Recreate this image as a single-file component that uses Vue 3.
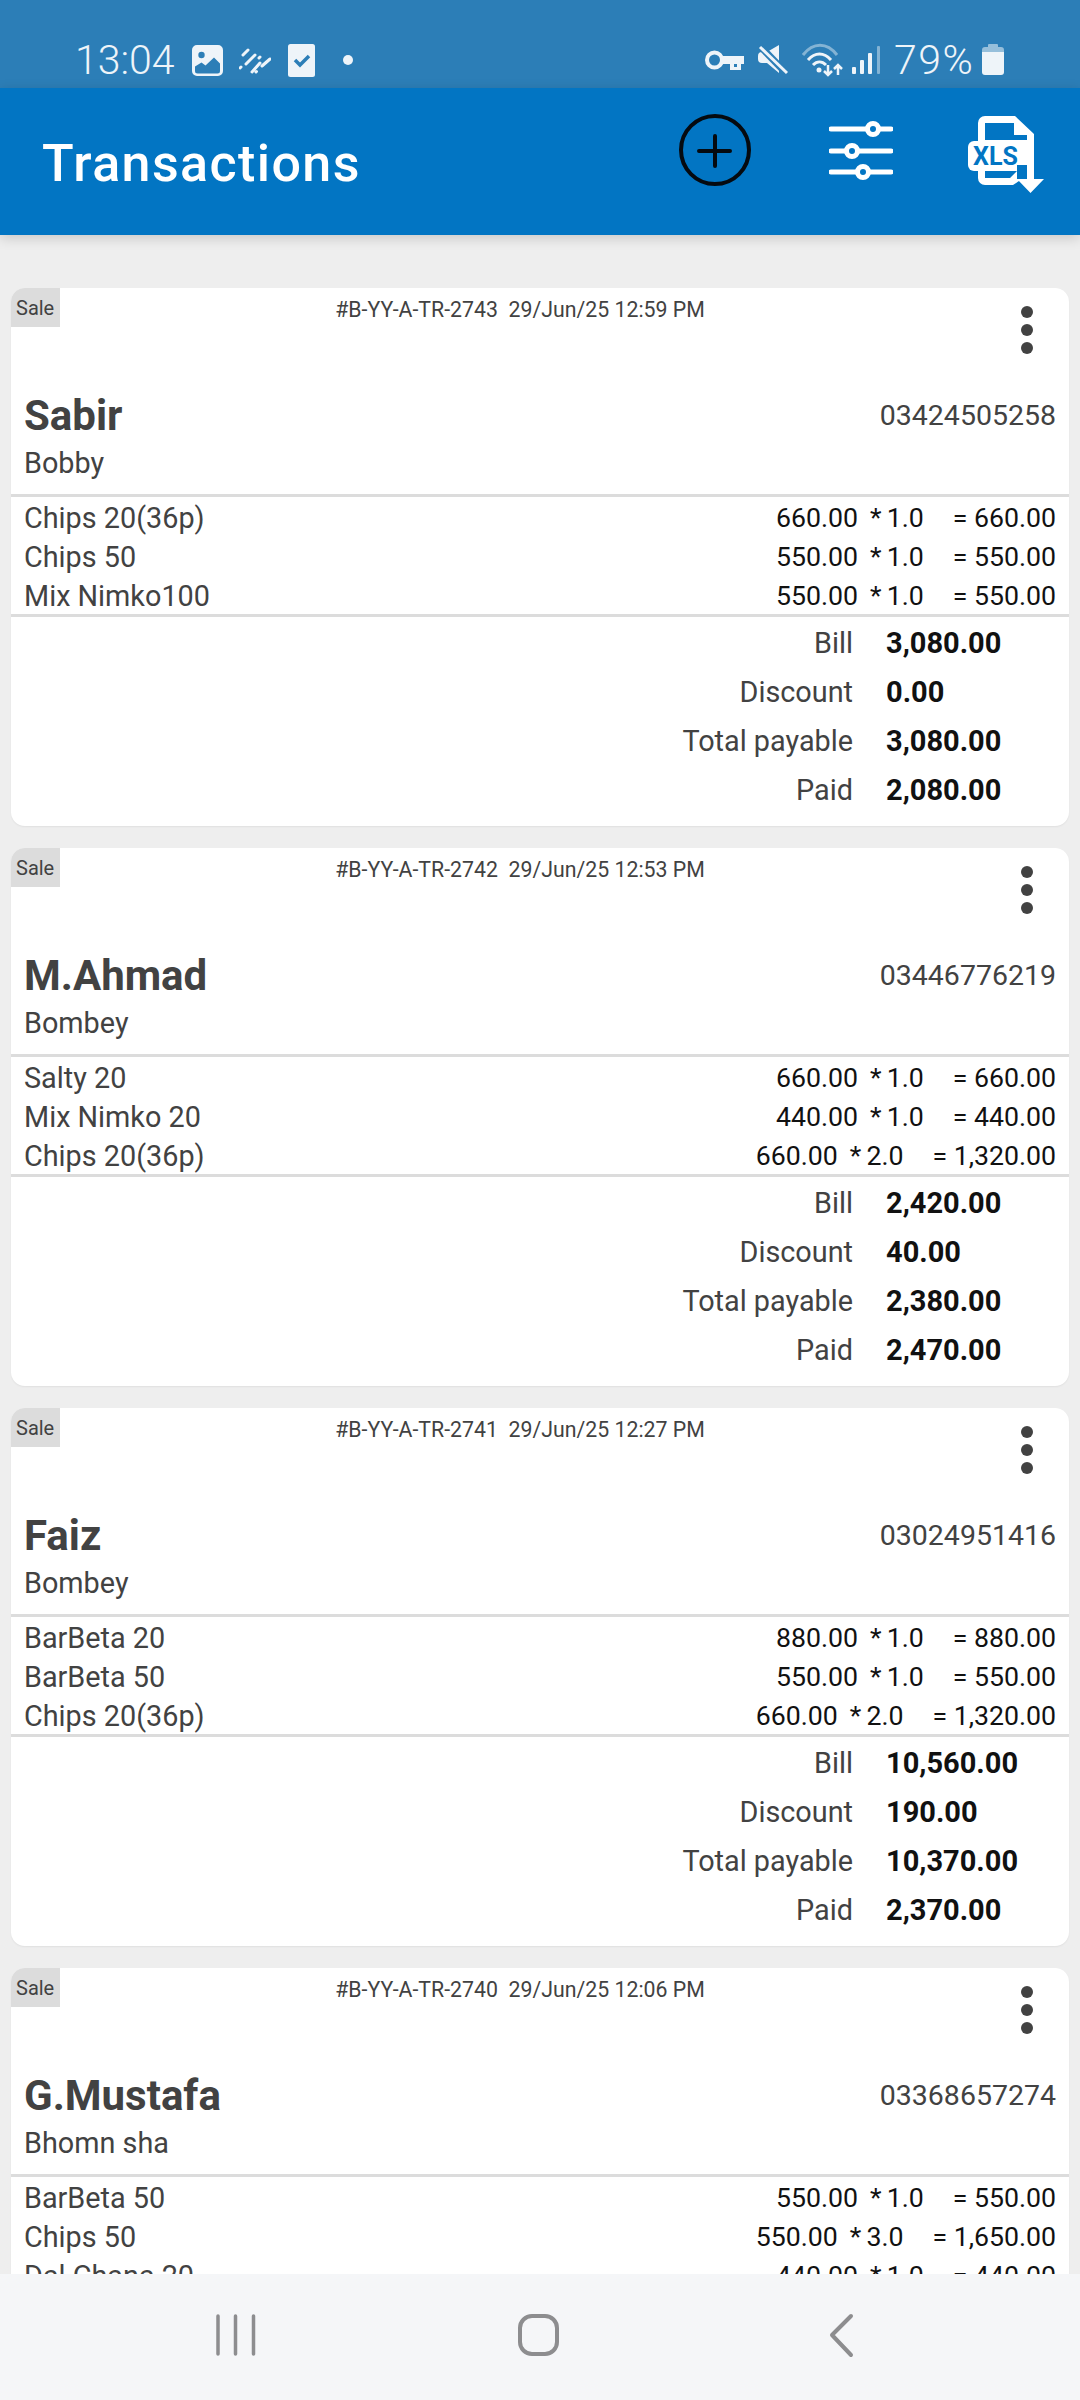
<script setup>
const transactions = [
  {
    no: '2743', time: '12:59 PM', name: 'Sabir', phone: '03424505258', area: 'Bobby',
    items: [
      { name: 'Chips 20(36p)', price: '660.00', qty: '1.0', total: '660.00' },
      { name: 'Chips 50', price: '550.00', qty: '1.0', total: '550.00' },
      { name: 'Mix Nimko100', price: '550.00', qty: '1.0', total: '550.00' },
    ],
    summary: [
      ['Bill', '3,080.00'],
      ['Discount', '0.00'],
      ['Total payable', '3,080.00'],
      ['Paid', '2,080.00'],
    ],
  },
  {
    no: '2742', time: '12:53 PM', name: 'M.Ahmad', phone: '03446776219', area: 'Bombey',
    items: [
      { name: 'Salty 20', price: '660.00', qty: '1.0', total: '660.00' },
      { name: 'Mix Nimko 20', price: '440.00', qty: '1.0', total: '440.00' },
      { name: 'Chips 20(36p)', price: '660.00', qty: '2.0', total: '1,320.00' },
    ],
    summary: [
      ['Bill', '2,420.00'],
      ['Discount', '40.00'],
      ['Total payable', '2,380.00'],
      ['Paid', '2,470.00'],
    ],
  },
  {
    no: '2741', time: '12:27 PM', name: 'Faiz', phone: '03024951416', area: 'Bombey',
    items: [
      { name: 'BarBeta 20', price: '880.00', qty: '1.0', total: '880.00' },
      { name: 'BarBeta 50', price: '550.00', qty: '1.0', total: '550.00' },
      { name: 'Chips 20(36p)', price: '660.00', qty: '2.0', total: '1,320.00' },
    ],
    summary: [
      ['Bill', '10,560.00'],
      ['Discount', '190.00'],
      ['Total payable', '10,370.00'],
      ['Paid', '2,370.00'],
    ],
  },
  {
    no: '2740', time: '12:06 PM', name: 'G.Mustafa', phone: '03368657274', area: 'Bhomn sha',
    items: [
      { name: 'BarBeta 50', price: '550.00', qty: '1.0', total: '550.00' },
      { name: 'Chips 50', price: '550.00', qty: '3.0', total: '1,650.00' },
      { name: 'Dal Chana 20', price: '440.00', qty: '1.0', total: '440.00' },
    ],
    summary: [],
  },
];
</script>

<template>
  <div class="screen">
    <div class="status-bar">
      <span class="clock">13:04</span>
      <svg class="st-image" width="31" height="40" viewBox="192 40 31 40">
        <path fill="#eef4f9" fill-rule="evenodd" d="M197 45h21a5 5 0 0 1 5 5v21a5 5 0 0 1-5 5h-21a5 5 0 0 1-5-5V50a5 5 0 0 1 5-5zM195 71a2.500 2.500 0 0 0 2.500 2.500h20a2.500 2.500 0 0 0 2.500-2.500v-7.500l-6-6-8.500 8-4-3-6.500 4z" />
        <circle cx="201.500" cy="55" r="3.200" fill="#2c7eb7" />
      </svg>
      <svg class="st-pulse" width="32" height="40" viewBox="239 40 32 40">
        <g stroke="#eef4f9" stroke-width="3" stroke-linecap="round">
          <path d="M243 55l5-5M246 64l9-9M252 72l8-9M262 66l8-7M259 58l1-1M240 68l1-1M256 72l.5-.5" />
        </g>
      </svg>
      <svg class="st-check" width="27" height="40" viewBox="288 40 27 40">
        <rect x="288" y="44" width="27" height="33" rx="2.500" fill="#eef4f9" />
        <path d="M295 60l5 5 9-9" fill="none" stroke="#2c7eb7" stroke-width="3.500" />
      </svg>
      <span class="st-dot"></span>

      <svg class="st-key" width="39" height="40" viewBox="705 40 39 40">
        <circle cx="714.500" cy="60" r="7.500" fill="none" stroke="#eef4f9" stroke-width="4" />
        <path d="M722 56h22v8h-3v6h-11v-6h-8z" fill="#eef4f9" />
        <path d="M734 64v3h3v-3z" fill="#2c7eb7" />
      </svg>
      <svg class="st-mute" width="30" height="40" viewBox="758 40 30 40">
        <path d="M779 45v28l-12-10h-5a4 4 0 0 1-4-4v-3a4 4 0 0 1 4-4h5z" fill="#eef4f9" />
        <path d="M759 45l28 29" stroke="#2c7eb7" stroke-width="7" />
        <path d="M760 47l27 26" stroke="#eef4f9" stroke-width="3" />
      </svg>
      <svg class="st-wifi" width="41" height="40" viewBox="802 40 41 40">
        <path d="M803 55c10-13 24-13 34 0" fill="none" stroke="#eef4f9" stroke-opacity=".45" stroke-width="3" />
        <path d="M808 60c7-8 16-8 23 0M813 65c4-4 9-4 13 0" fill="none" stroke="#eef4f9" stroke-width="3" />
        <circle cx="819" cy="70" r="2.500" fill="#eef4f9" />
        <path d="M828 65v10M824 71l4 4 4-4M838 75V65M834 69l4-4 4 4" fill="none" stroke="#eef4f9" stroke-width="2.500" />
      </svg>
      <svg class="st-signal" width="29" height="40" viewBox="852 40 29 40">
        <rect x="852" y="67" width="4" height="7" rx="1" fill="#eef4f9" />
        <rect x="860" y="60" width="4" height="14" rx="1" fill="#eef4f9" />
        <rect x="868" y="53" width="4" height="21" rx="1" fill="#eef4f9" />
        <rect x="877" y="46" width="3" height="28" rx="1" fill="#eef4f9" fill-opacity=".45" />
      </svg>
      <span class="battery-text">79%</span>
      <svg class="st-battery" width="22" height="40" viewBox="982 40 22 40">
        <path d="M989 44h8a1 1 0 0 1 1 1v2h3a3 3 0 0 1 3 3v2h-22v-2a3 3 0 0 1 3-3h3v-2a1 1 0 0 1 1-1z" fill="#eef4f9" fill-opacity=".55" />
        <path d="M982 52h22v20a3 3 0 0 1-3 3h-16a3 3 0 0 1-3-3z" fill="#eef4f9" />
      </svg>
    </div>

    <div class="app-bar">
      <h1 class="title">Transactions</h1>
      <svg class="bar-add" width="80" height="90" viewBox="675 110 80 90">
        <circle cx="715" cy="150" r="34" fill="none" stroke="#050a10" stroke-width="4" />
        <path d="M699 151h31M715 136v30" fill="none" stroke="#050a10" stroke-width="4" stroke-linecap="round" />
      </svg>
      <svg class="bar-filter" width="64" height="90" viewBox="829 110 64 90">
        <path d="M831 129h60M831 151h60M831 172h60" stroke="#fff" stroke-width="5" stroke-linecap="round" />
        <g fill="#0275c3" stroke="#fff" stroke-width="5">
          <circle cx="873" cy="129" r="5.500" />
          <circle cx="852" cy="151" r="5.500" />
          <circle cx="863" cy="172" r="5.500" />
        </g>
      </svg>
      <svg class="bar-xls" width="76" height="90" viewBox="968 110 76 90">
        <path fill="#fff" fill-rule="evenodd" d="M985 116h30l19 18v45h-12l-9 6h-28a7 7 0 0 1-7-7v-55a7 7 0 0 1 7-7zM985 123v17h42v-5h-13v-12zM985 171v7h25l7-7z" />
        <rect x="968" y="141" width="49" height="30" rx="6" fill="#fff" />
        <text x="995.500" y="165" class="xls-label" text-anchor="middle">XLS</text>
        <rect x="1017" y="165" width="10" height="14" fill="#0275c3" />
        <path d="M1027 165h7v14h10l-13.500 14-13.500-14h10z" fill="#fff" />
      </svg>
    </div>

    <div class="list">
      <div v-for="tx in transactions" :key="tx.no" class="card">
        <div class="card-head">
          <span class="badge">Sale</span>
          <span class="ref">#B-YY-A-TR-{{ tx.no }}&nbsp;&nbsp;29/Jun/25 {{ tx.time }}</span>
          <span class="more"><i></i><i></i><i></i></span>
        </div>
        <div class="customer">
          <span class="name">{{ tx.name }}</span>
          <span class="phone">{{ tx.phone }}</span>
        </div>
        <div class="area">{{ tx.area }}</div>
        <div class="items">
          <div v-for="item in tx.items" :key="item.name" class="item">
            <span class="item-name">{{ item.name }}</span>
            <span class="price">{{ item.price }}</span>
            <span class="qty">* {{ item.qty }}</span>
            <span class="total">= {{ item.total }}</span>
          </div>
        </div>
        <div class="summary">
          <template v-for="row in tx.summary" :key="row[0]">
            <span class="sum-label">{{ row[0] }}</span>
            <span class="sum-value">{{ row[1] }}</span>
          </template>
        </div>
      </div>
    </div>

    <div class="nav-bar">
      <svg width="60" height="60" viewBox="206 2305 60 60">
        <path d="M218 2316v38M235.500 2316v38M253.500 2316v38" stroke="#8d8d8f" stroke-width="3.500" stroke-linecap="round" />
      </svg>
      <svg width="60" height="60" viewBox="508 2305 60 60">
        <rect x="520" y="2316" width="37" height="38" rx="12" fill="none" stroke="#8d8d8f" stroke-width="4" />
      </svg>
      <svg width="60" height="60" viewBox="811 2305 60 60">
        <path d="M851 2316l-19 19 19 20" fill="none" stroke="#8d8d8f" stroke-width="4" stroke-linecap="round" stroke-linejoin="round" />
      </svg>
    </div>
  </div>
</template>

<style>
html,
body {
  margin: 0;
  overflow: hidden;
}
</style>

<style scoped>
.screen {
  width: 1080px;
  height: 2400px;
  display: flex;
  flex-direction: column;
  background: #eeeeee;
  font-family: Roboto, 'Liberation Sans', sans-serif;
  color: #424242;
  overflow: hidden;
}

.status-bar {
  height: 88px;
  flex-shrink: 0;
  box-sizing: border-box;
  padding: 40px 0 8px 75px;
  display: flex;
  align-items: center;
  background: #2c7eb7;
  color: #eef4f9;
}

.clock,
.battery-text {
  font-size: 41px;
  font-weight: 300;
  line-height: 40px;
  white-space: nowrap;
}

.clock {
  width: 99px;
}

.st-image {
  margin-left: 18px;
}

.st-pulse {
  margin-left: 16px;
}

.st-check {
  margin-left: 17px;
}

.st-dot {
  width: 10px;
  height: 10px;
  margin-left: 28px;
  border-radius: 50%;
  background: #eef4f9;
}

.st-key {
  margin-left: auto;
}

.st-mute {
  margin-left: 14px;
}

.st-wifi {
  margin-left: 14px;
}

.st-signal {
  margin-left: 9px;
}

.battery-text {
  width: 84px;
  margin-left: 13px;
  letter-spacing: 1.500px;
}

.st-battery {
  margin-right: 76px;
  margin-left: 4px;
}

.app-bar {
  position: relative;
  z-index: 1;
  height: 147px;
  flex-shrink: 0;
  box-sizing: border-box;
  padding-left: 42px;
  display: flex;
  background: #0275c3;
  box-shadow: 0 3px 12px rgba(0, 0, 0, 0.16);
}

.title {
  margin: 0;
  font-size: 52px;
  font-weight: 500;
  letter-spacing: 1.400px;
  line-height: 151px;
  color: #fff;
}

.bar-add {
  margin-left: auto;
  margin-top: 22px;
}

.bar-filter {
  margin-left: 74px;
  margin-top: 22px;
}

.bar-xls {
  margin-left: 75px;
  margin-right: 36px;
  margin-top: 22px;
}

.xls-label {
  font-family: Roboto, sans-serif;
  font-size: 25px;
  font-weight: 700;
  fill: #0275c3;
}

.list {
  flex: 1;
  min-height: 0;
  overflow: hidden;
  box-sizing: border-box;
  padding: 53px 11px 0;
  display: flex;
  flex-direction: column;
  gap: 22px;
}

.card {
  flex-shrink: 0;
  min-height: 538px;
  background: #fff;
  border-radius: 14px;
  overflow: hidden;
  box-shadow: 0 1px 2px rgba(0, 0, 0, 0.06);
}

.card-head {
  position: relative;
  height: 104px;
  display: flex;
  justify-content: center;
  align-items: flex-start;
}

.badge {
  position: absolute;
  top: 0;
  left: 0;
  width: 49px;
  height: 39px;
  box-sizing: border-box;
  padding-left: 5px;
  line-height: 41px;
  font-size: 20px;
  background: #dcdcdc;
}

.ref {
  margin-top: 5px;
  margin-right: 40px;
  font-size: 21.300px;
  line-height: 33px;
}

.more {
  position: absolute;
  top: 18px;
  right: 36px;
  display: flex;
  flex-direction: column;
  gap: 6px;
}

.more i {
  width: 12px;
  height: 12px;
  border-radius: 50%;
  background: #424242;
}

.customer {
  height: 46px;
  padding: 0 13px;
  display: flex;
  justify-content: space-between;
  align-items: center;
}

.name {
  font-size: 42px;
  font-weight: 700;
}

.phone {
  font-size: 28.500px;
}

.area {
  height: 56px;
  box-sizing: border-box;
  padding: 1px 13px 0;
  font-size: 28.800px;
  line-height: 48px;
}

.items {
  border-top: 3px solid #dcdcdc;
  border-bottom: 3px solid #dcdcdc;
}

.item {
  height: 39px;
  box-sizing: border-box;
  padding: 2px 13px 0;
  display: flex;
  justify-content: flex-end;
  align-items: center;
  font-size: 26.700px;
  color: #111;
}

.item-name {
  margin-right: auto;
  font-size: 28.800px;
  color: #424242;
}

.price {
  margin-right: 12px;
}

.qty {
  margin-right: 29px;
  word-spacing: -1.500px;
}

.summary {
  box-sizing: border-box;
  padding: 1px 0 12px;
  display: grid;
  grid-template-columns: 842px 1fr;
  grid-auto-rows: 49px;
  align-items: center;
  column-gap: 33px;
  font-size: 28.800px;
}

.sum-label {
  text-align: right;
}

.sum-value {
  font-size: 29px;
  font-weight: 700;
  color: #111;
}

.nav-bar {
  height: 126px;
  flex-shrink: 0;
  box-sizing: border-box;
  padding: 0 4px 4px 0;
  display: flex;
  justify-content: center;
  align-items: center;
  gap: 242.500px;
  background: #f5f6f8;
  position: relative;
}
</style>
